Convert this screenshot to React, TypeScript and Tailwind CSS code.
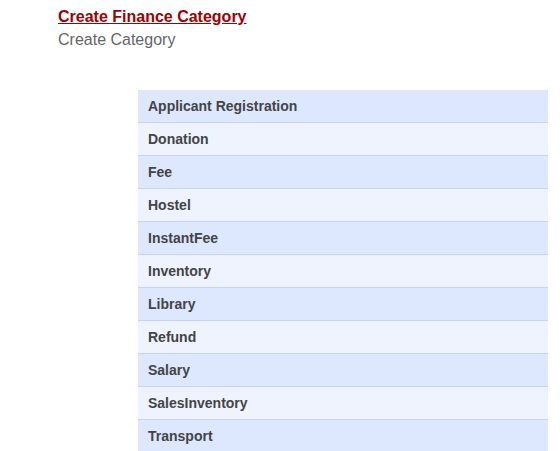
const categories = [
  'Applicant Registration',
  'Donation',
  'Fee',
  'Hostel',
  'InstantFee',
  'Inventory',
  'Library',
  'Refund',
  'Salary',
  'SalesInventory',
  'Transport',
];

export default function App() {
  return (
    <div className="w-[560px] h-[451px] overflow-hidden bg-white font-['Liberation_Sans',Arial,sans-serif]">
      {/* Heading */}
      <div className="pl-[58px] pt-[7px]">
        <a href="#" className="block text-[16px] leading-[19px] font-bold text-[#a00000] underline">
          Create Finance Category
        </a>
        <div className="mt-[4px] text-[16px] leading-[19px] text-[#666666]">Create Category</div>
      </div>

      {/* Category list */}
      <div className="ml-[138px] mt-[41px] w-[410px]">
        {categories.map((name, i) => (
          <div
            key={name}
            className={
              'h-[33px] border-b border-[#c6d5f4] pl-[10px] flex items-center text-[14px] font-bold text-[#444444] ' +
              (i % 2 === 0 ? 'bg-[#dde8fe]' : 'bg-[#eef3fe]')
            }
          >
            {name}
          </div>
        ))}
      </div>
    </div>
  );
}
